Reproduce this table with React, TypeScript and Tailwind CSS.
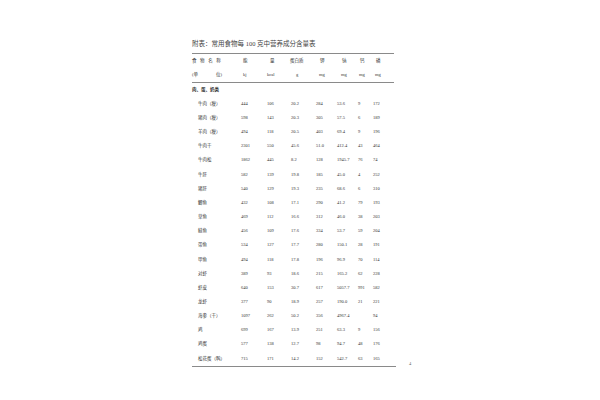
import React from 'react';

const cols = 'grid grid-cols-[49px_26px_24px_25px_21px_21px_15px_23px] items-center';

const rows: string[][] = [
  ['牛肉（瘦）', '444', '106', '20.2', '284', '53.6', '9', '172'],
  ['猪肉（瘦）', '598', '143', '20.3', '305', '57.5', '6', '189'],
  ['羊肉（瘦）', '494', '118', '20.5', '403', '69.4', '9', '196'],
  ['牛肉干', '2301', '550', '45.6', '51.0', '412.4', '43', '464'],
  ['牛肉松', '1862', '445', '8.2', '128', '1945.7', '76', '74'],
  ['牛肝', '582', '139', '19.8', '185', '45.0', '4', '252'],
  ['猪肝', '540', '129', '19.3', '235', '68.6', '6', '310'],
  ['鲫鱼', '432', '108', '17.1', '290', '41.2', '79', '193'],
  ['草鱼', '469', '112', '16.6', '312', '46.0', '38', '203'],
  ['鲢鱼', '456', '109', '17.6', '334', '53.7', '59', '204'],
  ['带鱼', '534', '127', '17.7', '280', '150.1', '28', '191'],
  ['甲鱼', '494', '118', '17.8', '196', '96.9', '70', '114'],
  ['对虾', '389', '93', '18.6', '215', '165.2', '62', '228'],
  ['虾皮', '640', '153', '30.7', '617', '5057.7', '991', '582'],
  ['龙虾', '377', '90', '18.9', '257', '190.0', '21', '221'],
  ['海参（干）', '1097', '262', '50.2', '356', '4967.4', '', '94'],
  ['鸡', '699', '167', '13.9', '251', '63.3', '9', '156'],
  ['鸡蛋', '577', '138', '12.7', '98', '94.7', '48', '176'],
  ['松花蛋（鸭）', '715', '171', '14.2', '152', '542.7', '63', '165'],
];

export default function App() {
  return (
    <div className="relative w-[600px] h-[400px] bg-white text-[#333] font-['Liberation_Serif','Noto_Sans_CJK_SC',serif]">
      <div className="pl-[192px] pt-[40px]">
        <div className="h-[8px] leading-[8px] text-[6.5px] text-[#444]">附表：常用食物每 100 克中营养成分含量表</div>
        <div className="mt-[5px] w-[202px] h-px bg-[#8a8a8a]" />

        <div className="text-[4.5px] leading-none">
          <div className={`${cols} h-[14px]`}>
            <div className="tracking-[3.6px]">食物名称</div>
            <div className="pl-[2px]">能</div>
            <div className="pl-[3px]">量</div>
            <div className="-ml-[1px]">蛋白质</div>
            <div className="pl-[4px]">钾</div>
            <div className="pl-[5px]">钠</div>
            <div className="pl-[2px]">钙</div>
            <div className="pl-[3px]">磷</div>
          </div>
          <div className={`${cols} h-[14px]`}>
            <div className="flex w-[30px] justify-between">
              <span>(单</span>
              <span>位)</span>
            </div>
            <div className="pl-[2px]">kj</div>
            <div>kcal</div>
            <div className="pl-[5px]">g</div>
            <div className="pl-[3px]">mg</div>
            <div className="pl-[4px]">mg</div>
            <div className="pl-[1px]">mg</div>
            <div className="pl-[2px]">mg</div>
          </div>
        </div>
        <div className="w-[202px] h-px bg-[#8a8a8a]" />

        <div className="text-[4.5px] leading-none">
          <div className="h-[14px] flex items-center font-bold">肉、蛋、奶类</div>
          {rows.map((r) => (
            <div key={r[0]} className={`${cols} h-[14.17px]`}>
              <div className="pl-[6px] whitespace-nowrap">{r[0]}</div>
              {r.slice(1).map((v, i) => (
                <div key={i} className="whitespace-nowrap">{v}</div>
              ))}
            </div>
          ))}
        </div>
        <div className="w-[204px] h-px bg-[#8a8a8a]" />
      </div>
      <div className="absolute left-[409px] top-[362px] text-[4.5px] leading-none text-[#666]">4</div>
    </div>
  );
}
